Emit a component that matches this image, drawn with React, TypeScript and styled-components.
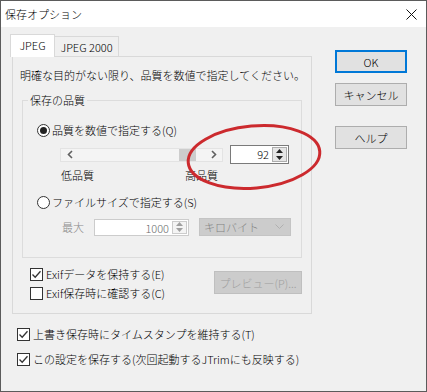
import React from "react";
import styled, { createGlobalStyle } from "styled-components";

const GlobalStyle = createGlobalStyle`
  html, body {
    margin: 0;
    padding: 0;
    background: #f0f0f0;
  }
  body {
    font-family: "Noto Sans CJK JP", "Liberation Sans", sans-serif;
    font-size: 11px;
    font-weight: 300;
    color: #000;
  }
  * {
    box-sizing: border-box;
  }
`;

const QUALITY = 92;

export default function App() {
  return (
    <>
      <GlobalStyle />
      <Window>
        <TitleBar>
          <span>保存オプション</span>
          <svg width="11" height="11" viewBox="0 0 11 11">
            <path d="M0.5 0.5 L10.5 10.5 M10.5 0.5 L0.5 10.5" stroke="#111" strokeWidth="1" />
          </svg>
        </TitleBar>
        <Body>
          <LeftColumn>
            <TabRow>
              <Tab $active>JPEG</Tab>
              <Tab>JPEG 2000</Tab>
            </TabRow>
            <Panel>
              <Lead>明確な目的がない限り、品質を数値で指定してください。</Lead>
              <Group>
                <Legend>保存の品質</Legend>
                <Row>
                  <Radio $checked />
                  <span>品質を数値で指定する(Q)</span>
                </Row>
                <SliderRow>
                  <ScrollBar>
                    <ArrowButton>
                      <svg width="6" height="9" viewBox="0 0 6 9">
                        <path d="M5 1 L1.5 4.5 L5 8" stroke="#606060" strokeWidth="1.6" fill="none" />
                      </svg>
                    </ArrowButton>
                    <Track>
                      <Thumb style={{ marginLeft: Math.round((QUALITY / 100) * 110) }} />
                    </Track>
                    <ArrowButton>
                      <svg width="6" height="9" viewBox="0 0 6 9">
                        <path d="M1 1 L4.5 4.5 L1 8" stroke="#606060" strokeWidth="1.6" fill="none" />
                      </svg>
                    </ArrowButton>
                  </ScrollBar>
                  <SpinEdit $width={59}>
                    <SpinValue>{QUALITY}</SpinValue>
                    <Spinner />
                  </SpinEdit>
                </SliderRow>
                <ScaleLabels>
                  <span>低品質</span>
                  <span>高品質</span>
                </ScaleLabels>
                <Row $top={11}>
                  <Radio />
                  <span>ファイルサイズで指定する(S)</span>
                </Row>
                <MaxRow>
                  <MaxLabel>最大</MaxLabel>
                  <SpinEdit $width={95} $disabled>
                    <SpinValue $disabled>1000</SpinValue>
                    <Spinner $disabled />
                  </SpinEdit>
                  <Combo>
                    <span>キロバイト</span>
                    <svg width="9" height="6" viewBox="0 0 9 6">
                      <path d="M0.5 0.5 L4.5 4.5 L8.5 0.5" stroke="#b0b0b0" strokeWidth="1" fill="none" />
                    </svg>
                  </Combo>
                </MaxRow>
              </Group>
              <ExifArea>
                <CheckList>
                  <Row>
                    <Check $checked />
                    <span>Exifデータを保持する(E)</span>
                  </Row>
                  <Row>
                    <Check />
                    <span>Exif保存時に確認する(C)</span>
                  </Row>
                </CheckList>
                <DisabledButton>プレビュー(P)...</DisabledButton>
              </ExifArea>
            </Panel>
            <BottomChecks>
              <Row>
                <Check $checked />
                <span>上書き保存時にタイムスタンプを維持する(T)</span>
              </Row>
              <Row>
                <Check $checked />
                <span>この設定を保存する(次回起動するJTrimにも反映する)</span>
              </Row>
            </BottomChecks>
          </LeftColumn>
          <RightColumn>
            <Button $default>OK</Button>
            <Button>キャンセル</Button>
            <Button $gap={20}>ヘルプ</Button>
          </RightColumn>
        </Body>
        <Marker width="150" height="76" viewBox="0 0 150 76">
          <ellipse
            cx="74"
            cy="37"
            rx="66"
            ry="31"
            transform="rotate(-5 74 37)"
            fill="none"
            stroke="#cc2a2e"
            strokeWidth="3"
          />
        </Marker>
      </Window>
    </>
  );
}

function Radio({ $checked }: { $checked?: boolean }) {
  return (
    <RadioCircle>
      {$checked && <RadioDot />}
    </RadioCircle>
  );
}

function Check({ $checked }: { $checked?: boolean }) {
  return (
    <CheckBox>
      {$checked && (
        <svg width="11" height="11" viewBox="0 0 11 11">
          <path d="M1.5 5.5 L4.2 8.3 L9.5 2.2" stroke="#333" strokeWidth="1.3" fill="none" />
        </svg>
      )}
    </CheckBox>
  );
}

function Spinner({ $disabled }: { $disabled?: boolean }) {
  const c = $disabled ? "#a0a0a0" : "#222";
  return (
    <SpinButtons $disabled={$disabled}>
      <SpinHalf>
        <svg width="7" height="4" viewBox="0 0 7 4">
          <path d="M0 4 L3.5 0 L7 4 Z" fill={c} />
        </svg>
      </SpinHalf>
      <SpinHalf>
        <svg width="7" height="4" viewBox="0 0 7 4">
          <path d="M0 0 L3.5 4 L7 0 Z" fill={c} />
        </svg>
      </SpinHalf>
    </SpinButtons>
  );
}

const Window = styled.div`
  position: relative;
  width: 427px;
  height: 392px;
  border: 1px solid #5b5b5b;
  background: #f0f0f0;
  display: flex;
  flex-direction: column;
`;

const TitleBar = styled.div`
  height: 26px;
  flex-shrink: 0;
  background: #fff;
  display: flex;
  align-items: center;
  justify-content: space-between;
  padding: 0 9px 0 4px;
  font-size: 11px;
  line-height: 16px;
`;

const Body = styled.div`
  flex: 1;
  display: flex;
  padding: 7px 0 0 9px;
`;

const LeftColumn = styled.div`
  width: 302px;
  display: flex;
  flex-direction: column;
`;

const RightColumn = styled.div`
  margin-left: 23px;
  padding-top: 16px;
  display: flex;
  flex-direction: column;
`;

const TabRow = styled.div`
  position: relative;
  z-index: 1;
  height: 22px;
  display: flex;
  align-items: flex-start;
`;

const Tab = styled.div<{ $active?: boolean }>`
  height: ${(p) => (p.$active ? 23 : 20)}px;
  margin-top: ${(p) => (p.$active ? 0 : 2)}px;
  width: ${(p) => (p.$active ? 45 : 64)}px;
  background: ${(p) => (p.$active ? "#fff" : "#f0f0f0")};
  border: 1px solid #d9d9d9;
  border-bottom: none;
  border-left: ${(p) => (p.$active ? "1px solid #d9d9d9" : "none")};
  display: flex;
  align-items: center;
  justify-content: center;
  padding-bottom: ${(p) => (p.$active ? 2 : 0)}px;
  line-height: 16px;
`;

const Panel = styled.div`
  margin-left: 2px;
  width: 300px;
  height: 258px;
  border: 1px solid #d9d9d9;
  display: flex;
  flex-direction: column;
  padding: 10px 9px 0 7px;
`;

const Lead = styled.div`
  line-height: 16px;
  white-space: nowrap;
`;

const Group = styled.fieldset`
  margin: 9px 0 0 2px;
  width: 280px;
  padding: 14px 0 21px 14px;
  border: 1px solid #dcdcdc;
  min-width: 0;
`;

const Legend = styled.legend`
  margin-left: -9px;
  padding: 0 2px;
  line-height: 16px;
`;

const Row = styled.div<{ $top?: number }>`
  height: 16px;
  margin-top: ${(p) => p.$top ?? 0}px;
  display: flex;
  align-items: center;
  line-height: 16px;
  white-space: nowrap;
`;

const RadioCircle = styled.span`
  width: 13px;
  height: 13px;
  margin-right: 2px;
  border: 1px solid #333;
  border-radius: 50%;
  background: #fff;
  display: flex;
  align-items: center;
  justify-content: center;
  flex-shrink: 0;
`;

const RadioDot = styled.span`
  width: 7px;
  height: 7px;
  border-radius: 50%;
  background: #222;
`;

const CheckBox = styled.span`
  width: 13px;
  height: 13px;
  margin-right: 3px;
  border: 1px solid #333;
  background: #fff;
  display: flex;
  align-items: center;
  justify-content: center;
  flex-shrink: 0;
`;

const SliderRow = styled.div`
  margin-top: 7px;
  padding-left: 23px;
  height: 19px;
  display: flex;
  align-items: center;
  gap: 7px;
`;

const ScrollBar = styled.div`
  width: 163px;
  height: 14px;
  border: 1px solid #e3e3e3;
  background: #f4f4f4;
  display: flex;
`;

const ArrowButton = styled.div`
  width: 17px;
  display: flex;
  align-items: center;
  justify-content: center;
`;

const Track = styled.div`
  flex: 1;
  display: flex;
`;

const Thumb = styled.div`
  width: 17px;
  background: #cdcdcd;
`;

const SpinEdit = styled.div<{ $width: number; $disabled?: boolean }>`
  width: ${(p) => p.$width}px;
  height: ${(p) => (p.$disabled ? 17 : 19)}px;
  border: 1px solid ${(p) => (p.$disabled ? "#cccccc" : "#7a7a7a")};
  background: #fff;
  display: flex;
  align-items: stretch;
  padding: 1px;
`;

const SpinValue = styled.div<{ $disabled?: boolean }>`
  flex: 1;
  text-align: right;
  padding-right: 3px;
  line-height: 15px;
  color: ${(p) => (p.$disabled ? "#6d6d6d" : "#000")};
`;

const SpinButtons = styled.div<{ $disabled?: boolean }>`
  width: 15px;
  display: flex;
  flex-direction: column;
  gap: 1px;
  border: 1px solid ${(p) => (p.$disabled ? "#cccccc" : "#adadad")};
  background: ${(p) => (p.$disabled ? "#f4f4f4" : "#e5e5e5")};
`;

const SpinHalf = styled.div`
  flex: 1;
  display: flex;
  align-items: center;
  justify-content: center;
`;

const ScaleLabels = styled.div`
  margin-top: 3px;
  margin-left: 24px;
  width: 157px;
  height: 16px;
  display: flex;
  justify-content: space-between;
  line-height: 16px;
`;

const MaxRow = styled.div`
  margin-top: 8px;
  padding-left: 25px;
  height: 18px;
  display: flex;
  align-items: center;
`;

const MaxLabel = styled.span`
  width: 32px;
  color: #8a8a8a;
  line-height: 16px;
`;

const Combo = styled.div`
  margin-left: 10px;
  width: 92px;
  height: 18px;
  background: #cccccc;
  border: 1px solid #c4c4c4;
  color: #838383;
  display: flex;
  align-items: center;
  justify-content: space-between;
  padding: 0 6px 0 4px;
  line-height: 16px;
`;

const ExifArea = styled.div`
  margin-top: 8px;
  margin-left: 10px;
  display: flex;
  justify-content: space-between;
  align-items: flex-start;
`;

const CheckList = styled.div`
  display: flex;
  flex-direction: column;
  gap: 3px;
`;

const DisabledButton = styled.div`
  margin-top: 5px;
  width: 88px;
  height: 23px;
  background: #cccccc;
  border: 1px solid #bfbfbf;
  color: #a0a0a0;
  display: flex;
  align-items: center;
  justify-content: center;
  line-height: 16px;
`;

const BottomChecks = styled.div`
  margin-top: 12px;
  margin-left: 7px;
  display: flex;
  flex-direction: column;
  gap: 9px;
`;

const Button = styled.div<{ $default?: boolean; $gap?: number }>`
  margin-top: ${(p) => p.$gap ?? 10}px;
  width: 72px;
  height: 23px;
  background: #e1e1e1;
  border: ${(p) => (p.$default ? "2px solid #0078d7" : "1px solid #adadad")};
  display: flex;
  align-items: center;
  justify-content: center;
  line-height: 16px;

  &:first-child {
    margin-top: 0;
  }
`;

const Marker = styled.svg`
  position: absolute;
  left: 179px;
  top: 119px;
  pointer-events: none;
`;
